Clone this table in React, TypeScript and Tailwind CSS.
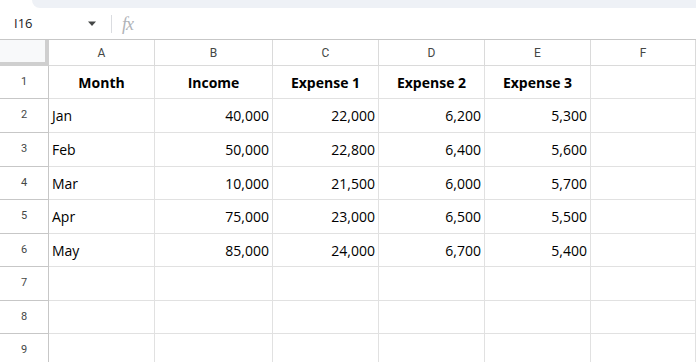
import React from 'react';

const columns = ['A', 'B', 'C', 'D', 'E', 'F'];

const rows: string[][] = [
    ['Month', 'Income', 'Expense 1', 'Expense 2', 'Expense 3', ''],
    ['Jan', '40,000', '22,000', '6,200', '5,300', ''],
    ['Feb', '50,000', '22,800', '6,400', '5,600', ''],
    ['Mar', '10,000', '21,500', '6,000', '5,700', ''],
    ['Apr', '75,000', '23,000', '6,500', '5,500', ''],
    ['May', '85,000', '24,000', '6,700', '5,400', ''],
    ['', '', '', '', '', ''],
    ['', '', '', '', '', ''],
    ['', '', '', '', '', ''],
];

// row heights incl. bottom border
const rowHeights = ['h-[33px]', 'h-[34px]', 'h-[34px]', 'h-[33px]', 'h-[34px]', 'h-[33px]', 'h-[34px]', 'h-[33px]', 'h-[34px]'];

const gridCols = 'grid grid-cols-[49px_106px_118px_106px_106px_106px_1fr]';

function FormulaBar() {
    return (
        <div className="h-[32px] flex items-center border-b border-[#c7c7c7] bg-white">
            <div className="w-[104px] pl-[14px] pr-[6px] flex items-center justify-between">
                <span className="text-[13px] text-[#202124]">I16</span>
                <svg width="10" height="6" viewBox="0 0 10 6" className="mr-[1px] mt-[1px]">
                    <path d="M1 0.5 L9 0.5 L5 5 Z" fill="#444746" />
                </svg>
            </div>
            <div className="w-px h-[18px] bg-[#dadce0] ml-[7px]" />
            <span className="ml-[10px] text-[18px] italic text-[#b0b3b8] font-['Liberation_Serif',serif] tracking-[-1px] leading-none">
                fx
            </span>
        </div>
    );
}

function HeaderRow() {
    return (
        <div className={`${gridCols} h-[26px]`}>
            <div className="border-r-[4px] border-b-[4px] border-[#cfcfcf] bg-[#f8f9fa]" />
            {columns.map((c) => (
                <div
                    key={c}
                    className="flex items-center justify-center border-r border-b border-[#dadada] text-[12px] text-[#444746] pt-[1px] font-['Roboto',sans-serif]"
                >
                    {c}
                </div>
            ))}
        </div>
    );
}

export default function App() {
    return (
        <div className="w-[696px] h-[362px] overflow-hidden bg-white font-['Open_Sans',sans-serif]">
            <div className="h-[8px] flex">
                <div className="w-[32px] bg-white" />
                <div className="flex-1 bg-[#eef1f6] rounded-bl-[8px]" />
            </div>
            <FormulaBar />
            <HeaderRow />
            {rows.map((row, i) => (
                <div key={i} className={`${gridCols} ${rowHeights[i]}`}>
                    <div className="flex items-center justify-center border-r border-b border-[#c7c7c7] text-[11px] text-[#444746] font-['Roboto',sans-serif]">
                        {i + 1}
                    </div>
                    {row.map((cell, j) => (
                        <div
                            key={j}
                            className={
                                'flex items-center border-r border-b border-[#e1e1e1] text-[14px] text-black px-[3px] ' +
                                (i === 0
                                    ? 'justify-center font-bold'
                                    : j === 0
                                      ? 'justify-start'
                                      : 'justify-end')
                            }
                        >
                            {cell}
                        </div>
                    ))}
                </div>
            ))}
        </div>
    );
}
